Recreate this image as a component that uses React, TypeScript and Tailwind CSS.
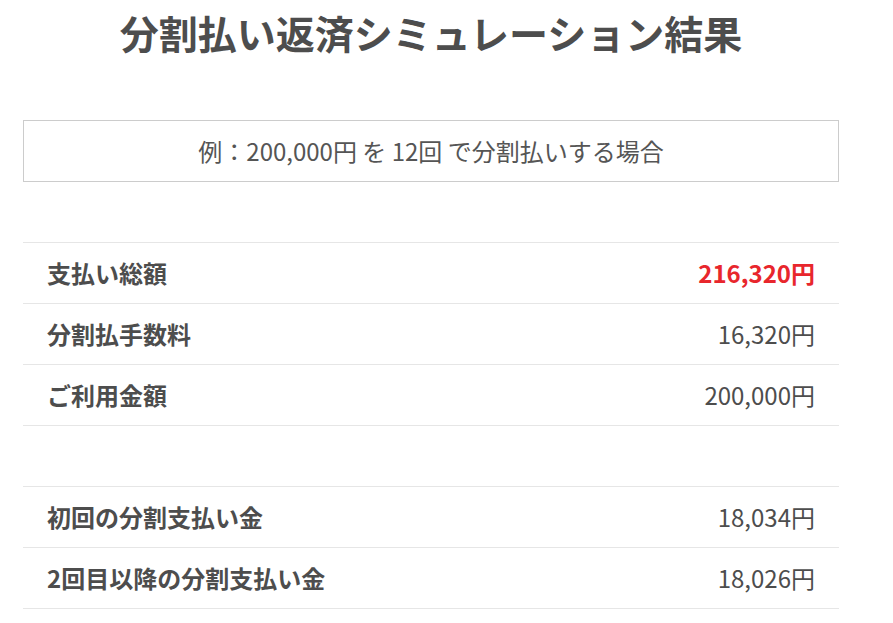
import React from "react";

type Row = { label: string; value: string; highlight?: boolean };

const summaryRows: Row[] = [
    { label: "支払い総額", value: "216,320円", highlight: true },
    { label: "分割払手数料", value: "16,320円" },
    { label: "ご利用金額", value: "200,000円" },
];

const installmentRows: Row[] = [
    { label: "初回の分割支払い金", value: "18,034円" },
    { label: "2回目以降の分割支払い金", value: "18,026円" },
];

const ResultTable = ({ rows }: { rows: Row[] }) => {
    return (
        <div className="border-t border-[#e6e6e6]">
            {rows.map((r) => (
                <div key={r.label} className="flex items-center justify-between h-[61px] px-6 border-b border-[#e6e6e6]">
                    <span className="text-[24px] font-bold text-[#4d4d4d]">{r.label}</span>
                    <span className={r.highlight ? "text-[24px] font-bold text-[#e8262c]" : "text-[24px] text-[#4d4d4d]"}>
                        {r.value}
                    </span>
                </div>
            ))}
        </div>
    );
};

const App = () => {
    return (
        <div className="bg-white min-h-[623px] text-[#4d4d4d]" style={{ fontFamily: '"Noto Sans CJK JP", "Noto Sans", sans-serif' }}>
            <div className="ml-[23px] w-[816px]">
                <h1 className="pt-[5px] h-[58px] text-center text-[39px] leading-[54px] font-bold text-[#4d4d4d]">
                    分割払い返済シミュレーション結果
                </h1>
                <div className="mt-[62px] h-[62px] border border-[#cccccc] flex items-center justify-center text-[24px] text-[#555555]">
                    例：200,000円 を 12回 で分割払いする場合
                </div>
                <div className="mt-[60px]">
                    <ResultTable rows={summaryRows} />
                </div>
                <div className="mt-[60px]">
                    <ResultTable rows={installmentRows} />
                </div>
            </div>
        </div>
    );
};

export default App;
